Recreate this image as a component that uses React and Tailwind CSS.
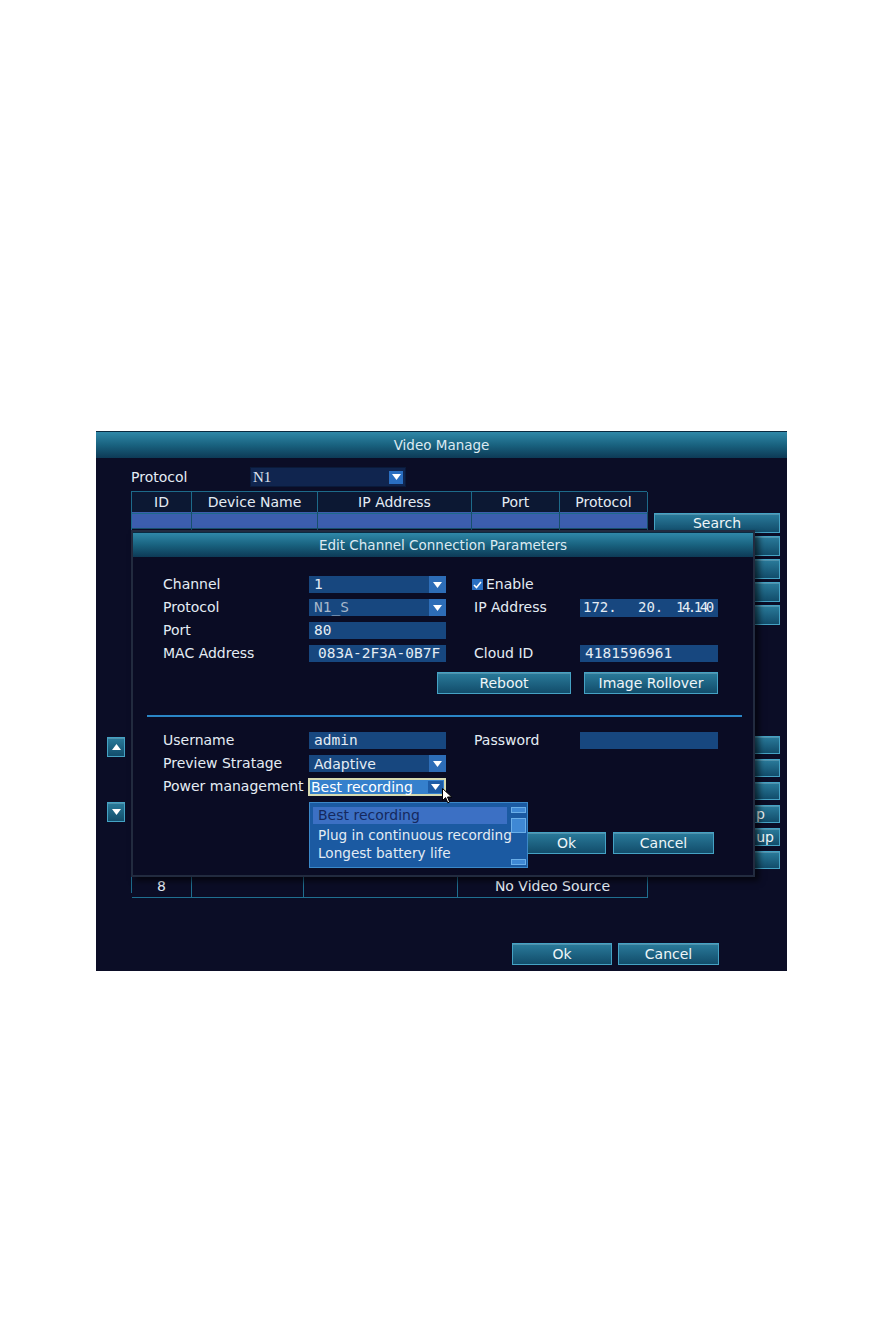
import React from "react";

// DVR "Video Manage" screen with the "Edit Channel Connection Parameters" dialog open

const SANS = "font-['DejaVu_Sans',Verdana,sans-serif]";
const MONO = "font-['DejaVu_Sans_Mono',monospace] text-[14.5px]";

function Triangle({ up = false }) {
  return (
    <svg width="9" height="6" viewBox="0 0 9 6">
      <path d={up ? "M0 6H9L4.5 0Z" : "M0 0H9L4.5 6Z"} fill="#fff" />
    </svg>
  );
}

function TitleBar({ className = "", children }) {
  return (
    <div
      className={`flex items-center justify-center border-t border-[#0a2a40] bg-linear-to-b from-[#2f88a8] via-[#19627f] to-[#0d3a56] text-[13.5px] text-[#dceaf2] ${className}`}
    >
      {children}
    </div>
  );
}

function Btn({ className = "", children }) {
  return (
    <div
      className={`flex items-center justify-center border border-[#45a2c4] bg-linear-to-b from-[#2a7b9b] to-[#124d6b] text-[#eef5f8] shadow-[inset_0_1px_0_rgba(255,255,255,0.18)] ${className}`}
    >
      {children}
    </div>
  );
}

function Box({ className = "", valueClass = "", arrow = false, children }) {
  return (
    <div className={`flex h-full items-center bg-[#17477f] ${className}`}>
      <span className={`flex-1 whitespace-nowrap pl-[5px] leading-none ${valueClass}`}>{children}</span>
      {arrow && (
        <span className="flex h-full w-[17px] items-center justify-center bg-[#2d6db7]">
          <Triangle />
        </span>
      )}
    </div>
  );
}

function Cursor() {
  return (
    <svg width="11" height="16" viewBox="0 0 11 16">
      <path d="M0.5 0.5V12.5L3.6 9.6L5.8 14.8L7.6 14L5.5 9H9.8Z" fill="#fff" stroke="#000" strokeWidth="1" />
    </svg>
  );
}

const topCols = ["ID", "Device Name", "IP Address", "Port", "Protocol"];

function TopTable() {
  const rows = Array.from({ length: 12 });
  return (
    <div className="mt-[4px] border-l border-t border-[#1d6a8a]">
      <div className="grid h-[20px] grid-cols-[60px_126px_154px_88px_88px] bg-[#0c1833]">
        {topCols.map((c) => (
          <div key={c} className="flex items-center justify-center border-r border-b border-[#1d6a8a]">
            {c}
          </div>
        ))}
      </div>
      {rows.map((_, i) => (
        <div
          key={i}
          className={`grid h-[17px] grid-cols-[60px_126px_154px_88px_88px] ${i === 0 ? "bg-[#3c5eae]" : ""}`}
        >
          {topCols.map((c) => (
            <div key={c} className="border-r border-b border-[#17506c]" />
          ))}
        </div>
      ))}
    </div>
  );
}

function BottomTable() {
  // rows 1-7 sit under the dialog, only the last one shows
  const rows = [1, 2, 3, 4, 5, 6, 7, 8];
  return (
    <div className="mt-[20px] border-l border-t border-[#1d6a8a]">
      <div className="grid h-[20px] grid-cols-[60px_112px_154px_190px] bg-[#0c1833]">
        {[0, 1, 2, 3].map((c) => (
          <div key={c} className="border-r border-b border-[#1d6a8a]" />
        ))}
      </div>
      {rows.map((n) => (
        <div key={n} className="grid h-[17px] grid-cols-[60px_112px_154px_190px]">
          <div className="flex items-center justify-center border-r border-b border-[#1f6f90]">{n === 8 ? n : ""}</div>
          <div className="border-r border-b border-[#1f6f90]" />
          <div className="border-r border-b border-[#1f6f90]" />
          <div className="flex items-center justify-center border-r border-b border-[#1f6f90]">
            {n === 8 ? "No Video Source" : ""}
          </div>
        </div>
      ))}
    </div>
  );
}

function Row({ label, children, right }) {
  return (
    <div className="flex h-[17px] items-center">
      <span className="w-[146px] whitespace-nowrap">{label}</span>
      <div className="h-full w-[137px]">{children}</div>
      {right}
    </div>
  );
}

function RightField({ label, value, valueClass = MONO }) {
  return (
    <div className="ml-[26px] flex h-full items-center">
      <span className="w-[108px] pl-[2px]">{label}</span>
      <div className="h-full w-[138px]">
        {value !== undefined && <Box valueClass={valueClass}>{value}</Box>}
      </div>
    </div>
  );
}

function Dialog() {
  return (
    <div className="absolute left-[35px] top-[99px] h-[347px] w-[624px] border-2 border-[#222b3f] bg-[#0a0c24] shadow-[4px_4px_6px_rgba(0,0,0,0.6)]">
      <TitleBar className="h-[25px]">Edit Channel Connection Parameters</TitleBar>
      <div className="relative pl-[30px] pt-[19px]">
        <div className="flex flex-col gap-[6px]">
          <Row
            label="Channel"
            right={
              <div className="ml-[26px] flex items-center gap-[3px]">
                <span className="flex h-[11px] w-[11px] items-center justify-center bg-[#2a6fc0]">
                  <svg width="9" height="8" viewBox="0 0 9 8">
                    <path d="M1 4L3.5 6.5L8 1" stroke="#fff" strokeWidth="1.6" fill="none" />
                  </svg>
                </span>
                <span>Enable</span>
              </div>
            }
          >
            <Box arrow valueClass={MONO}>1</Box>
          </Row>
          <Row
            label="Protocol"
            right={
              <div className="ml-[26px] flex h-full items-center">
                <span className="w-[108px] pl-[2px]">IP Address</span>
                <div className="flex h-[18px] w-[138px] items-center bg-[#17477f] pl-[3px] font-['DejaVu_Sans_Mono',monospace] text-[14px]">
                  <span className="w-[55px]">172.</span>
                  <span className="w-[38px]">20.</span>
                  <span className="tracking-[-2.5px]">14.140</span>
                </div>
              </div>
            }
          >
            <Box arrow valueClass={`${MONO} text-[#a7b8cc]`}>N1_S</Box>
          </Row>
          <Row label="Port">
            <Box valueClass={MONO}>80</Box>
          </Row>
          <Row label="MAC Address" right={<RightField label="Cloud ID" value="4181596961" />}>
            <Box valueClass={`${MONO} pl-[9px]`}>083A-2F3A-0B7F</Box>
          </Row>
        </div>

        <div className="mt-[10px] flex gap-[13px] pl-[274px]">
          <Btn className="h-[22px] w-[134px]">Reboot</Btn>
          <Btn className="h-[22px] w-[134px]">Image Rollover</Btn>
        </div>

        <div className="-ml-[16px] mt-[21px] h-[2px] w-[595px] bg-[#2a86c6]" />

        <div className="mt-[15px] flex flex-col gap-[6px]">
          <Row label="Username" right={<RightField label="Password" value="" />}>
            <Box valueClass={MONO}>admin</Box>
          </Row>
          <Row label="Preview Stratage">
            <Box arrow>Adaptive</Box>
          </Row>
          <Row label="Power management">
            <div className="-ml-[1px] flex h-[18px] items-center border-2 border-[#d6dab0] bg-[#3580cc] pl-[1px]">
              <span className="flex-1 whitespace-nowrap leading-none text-white">Best recording</span>
              <span className="mr-[1px] flex h-[12px] w-[15px] items-center justify-center bg-[#1d5ca6]">
                <Triangle />
              </span>
            </div>
          </Row>
        </div>

        <div className="ml-[364px] mt-[37px] flex gap-[7px]">
          <Btn className="h-[22px] w-[79px]">Ok</Btn>
          <Btn className="h-[22px] w-[101px]">Cancel</Btn>
        </div>

        {/* open dropdown list */}
        <div className="absolute left-[176px] top-[245px] h-[66px] w-[219px] overflow-hidden border border-[#3b88c8] bg-[#1b5aa2]">
          <div className="pl-[3px] pt-[4px]">
            <div className="flex h-[17px] w-[194px] items-center bg-[#3c70c4] pl-[5px] text-[#15295e]">
              Best recording
            </div>
            <div className="mt-[2px] flex h-[18px] items-center whitespace-nowrap pl-[5px] text-[13.6px]">
              Plug in continuous recording
            </div>
            <div className="flex h-[18px] items-center pl-[5px] text-[13.6px]">Longest battery life</div>
          </div>
          <div className="absolute bottom-[2px] right-[1px] top-[4px] flex w-[15px] flex-col">
            <div className="h-[6px] w-full border border-[#6aaee8] bg-[#3f88d4]" />
            <div className="mt-[5px] h-[15px] w-full border border-[#6aaee8] bg-[#3f88d4]" />
            <div className="mt-auto h-[6px] w-full border border-[#6aaee8] bg-[#3f88d4]" />
          </div>
        </div>

        <div className="absolute left-[309px] top-[231px]">
          <Cursor />
        </div>
      </div>
    </div>
  );
}

export default function App() {
  return (
    <div className={`min-h-[1324px] bg-white pl-[96px] pt-[431px] ${SANS}`}>
      <div className="relative h-[540px] w-[691px] overflow-hidden bg-[#0b0d26] text-[14px] text-[#e4ecf4]">
        <TitleBar className="h-[27px]">Video Manage</TitleBar>

        <div className="flex">
          {/* up / down arrows */}
          <div className="flex w-[35px] flex-col pl-[11px] pt-[279px]">
            <Btn className="h-[20px] w-[18px]">
              <Triangle up />
            </Btn>
            <Btn className="mt-[45px] h-[20px] w-[18px]">
              <Triangle />
            </Btn>
          </div>

          <div className="w-[516px]">
            <div className="mt-[9px] flex h-[20px] items-center">
              <span className="w-[119px]">Protocol</span>
              <div className="flex h-full w-[156px] items-center border border-[#0a1a3a] bg-[#10254f]">
                <span className="flex-1 pl-[2px] font-['Liberation_Serif',serif] text-[15px] text-[#dfe6f0]">N1</span>
                <span className="mr-[2px] flex h-[13px] w-[14px] items-center justify-center bg-[#2a6ec0]">
                  <Triangle />
                </span>
              </div>
            </div>
            <TopTable />
            <BottomTable />
          </div>

          <div className="ml-[7px] flex w-[126px] flex-col pt-[55px]">
            <div className="flex flex-col gap-[3px]">
              {["Search", "", "", "", ""].map((t, i) => (
                <Btn key={i} className="h-[20px] w-full">
                  {t}
                </Btn>
              ))}
            </div>
            <div className="mt-[111px] flex flex-col gap-[5px]">
              {["", "", "", "Remote Setup", "Advanced Setup", ""].map((t, i) => (
                <Btn key={i} className="h-[18px] w-full justify-end overflow-hidden whitespace-nowrap pr-[5px]">
                  {t === "Remote Setup" ? <span className="pr-[9px]">p</span> : t === "Advanced Setup" ? "up" : t}
                </Btn>
              ))}
            </div>
          </div>
        </div>

        <div className="mt-[50px] flex gap-[6px] pl-[416px]">
          <Btn className="h-[22px] w-[100px]">Ok</Btn>
          <Btn className="h-[22px] w-[101px]">Cancel</Btn>
        </div>

        <Dialog />
      </div>
    </div>
  );
}
